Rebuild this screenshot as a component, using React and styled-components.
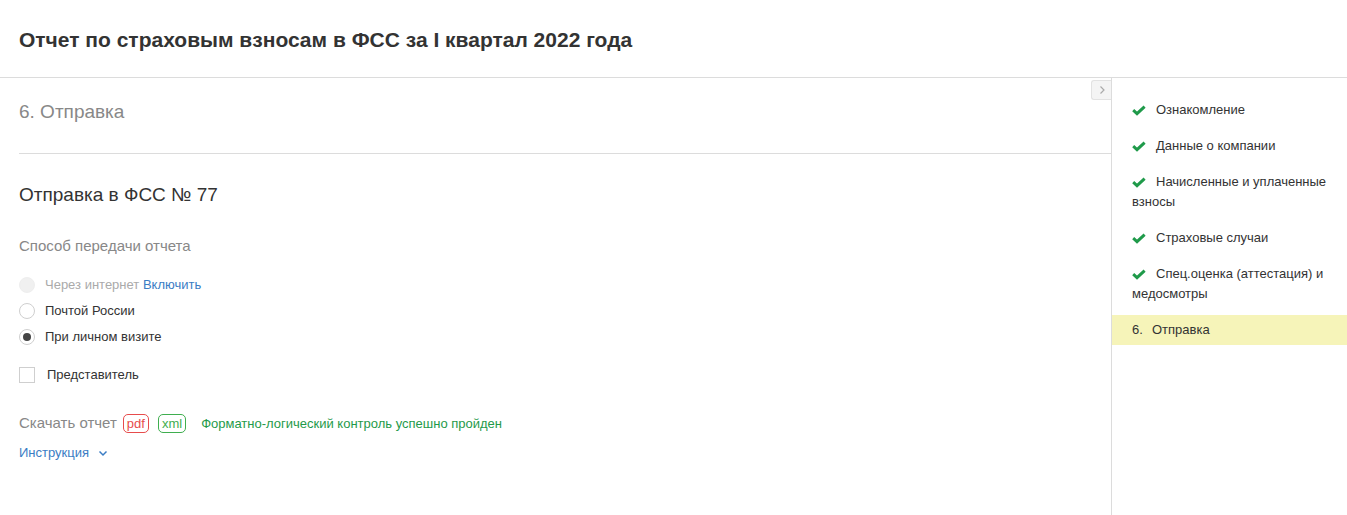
import React from "react";
import styled, { createGlobalStyle } from "styled-components";

const GlobalStyle = createGlobalStyle`
  html, body {
    margin: 0;
    padding: 0;
    background: #fff;
    font-family: "Liberation Sans", Arial, sans-serif;
    color: #333;
  }
`;

const steps = [
  { label: "Ознакомление", done: true },
  { label: "Данные о компании", done: true },
  { label: "Начисленные и уплаченные взносы", done: true },
  { label: "Страховые случаи", done: true },
  { label: "Спец.оценка (аттестация) и медосмотры", done: true },
  { label: "Отправка", num: 6, active: true },
];

const Check = () => (
  <svg width="14" height="11" viewBox="0 0 14 11">
    <path d="M1.2 5.2 L5 8.6 L12.6 1.6" fill="none" stroke="#1f9a4a" strokeWidth="3" />
  </svg>
);

const Chevron = ({ dir = "down", color = "#3b7dc4" }) => (
  <svg width="10" height="10" viewBox="0 0 10 10">
    {dir === "down" ? (
      <path d="M1.5 3.5 L5 7 L8.5 3.5" fill="none" stroke={color} strokeWidth="1.5" />
    ) : (
      <path d="M3.5 1.5 L7 5 L3.5 8.5" fill="none" stroke={color} strokeWidth="1.2" />
    )}
  </svg>
);

const App = () => {
  return (
    <Page>
      <GlobalStyle />
      <Header>
        <h1>Отчет по страховым взносам в ФСС за I квартал 2022 года</h1>
      </Header>
      <Body>
        <Main>
          <SectionTitle>6. Отправка</SectionTitle>
          <Content>
            <SubTitle>Отправка в ФСС № 77</SubTitle>
            <Label>Способ передачи отчета</Label>
            <Options>
              <Option disabled>
                <Radio disabled />
                <span>
                  Через интернет <Link>Включить</Link>
                </span>
              </Option>
              <Option>
                <Radio />
                <span>Почтой России</span>
              </Option>
              <Option>
                <Radio checked />
                <span>При личном визите</span>
              </Option>
            </Options>
            <CheckRow>
              <Box />
              <span>Представитель</span>
            </CheckRow>
            <Download>
              <Label as="span">Скачать отчет</Label>
              <Badge color="#e74c4c">pdf</Badge>
              <Badge color="#3fae4f">xml</Badge>
              <Success>Форматно-логический контроль успешно пройден</Success>
            </Download>
            <Instruction>
              Инструкция <Chevron />
            </Instruction>
          </Content>
        </Main>
        <Sidebar>
          <Toggle>
            <Chevron dir="right" color="#aaa" />
          </Toggle>
          <Steps>
            {steps.map((s) => (
              <Step key={s.label} active={s.active}>
                {s.done ? (
                  <Mark>
                    <Check />
                  </Mark>
                ) : (
                  <Num>{s.num}.</Num>
                )}
                {s.label}
              </Step>
            ))}
          </Steps>
        </Sidebar>
      </Body>
    </Page>
  );
};

const Page = styled.div`
  width: 1347px;
  height: 515px;
  display: flex;
  flex-direction: column;
  overflow: hidden;
`;

const Header = styled.div`
  height: 77px;
  flex-shrink: 0;
  border-bottom: 1px solid #dcdcdc;
  display: flex;
  align-items: center;
  padding: 0 19px;

  h1 {
    margin: 0;
    font-size: 21px;
    font-weight: 700;
    color: #333;
    position: relative;
    top: 1px;
  }
`;

const Body = styled.div`
  flex: 1;
  display: flex;
`;

const Main = styled.div`
  flex: 1;
  padding-left: 19px;
`;

const SectionTitle = styled.div`
  height: 76px;
  box-sizing: border-box;
  border-bottom: 1px solid #dcdcdc;
  display: flex;
  align-items: center;
  font-size: 19px;
  color: #888;
  padding-bottom: 8px;
`;

const Content = styled.div`
  display: flex;
  flex-direction: column;
  align-items: flex-start;
`;

const SubTitle = styled.div`
  font-size: 19px;
  color: #333;
  margin-top: 30px;
  line-height: 22px;
`;

const Label = styled.div`
  font-size: 15px;
  color: #888;
  margin-top: 30px;
  line-height: 20px;
`;

const Options = styled.div`
  display: flex;
  flex-direction: column;
  gap: 7px;
  margin-top: 19px;
`;

const Option = styled.label`
  display: flex;
  align-items: center;
  gap: 10px;
  font-size: 13px;
  line-height: 19px;
  height: 19px;
  color: ${(p) => (p.disabled ? "#aaa" : "#333")};
`;

const Radio = styled.span`
  width: 14px;
  height: 14px;
  border-radius: 50%;
  border: 1px solid ${(p) => (p.disabled ? "#eee" : "#cfcfcf")};
  background: ${(p) => (p.disabled ? "#f0f0f0" : "#fff")};
  display: flex;
  align-items: center;
  justify-content: center;

  &::after {
    content: "";
    display: ${(p) => (p.checked ? "block" : "none")};
    width: 8px;
    height: 8px;
    border-radius: 50%;
    background: #444;
  }
`;

const Link = styled.span`
  color: #3b7dc4;
`;

const CheckRow = styled.label`
  display: flex;
  align-items: center;
  gap: 12px;
  font-size: 13px;
  line-height: 19px;
  color: #333;
  margin-top: 19px;
`;

const Box = styled.span`
  width: 14px;
  height: 14px;
  border: 1px solid #cfcfcf;
  background: #fff;
`;

const Download = styled.div`
  display: flex;
  align-items: center;
  gap: 6px;
  margin-top: 29px;

  ${Label} {
    margin: 0;
  }
`;

const Badge = styled.span`
  font-size: 13px;
  color: ${(p) => p.color};
  border: 1px solid ${(p) => p.color};
  border-radius: 5px;
  padding: 0 3px;
  line-height: 17px;
  & + & {
    margin-left: 3px;
  }
`;

const Success = styled.span`
  font-size: 13px;
  color: #1f9a4a;
  margin-left: 9px;
`;

const Instruction = styled.div`
  display: flex;
  align-items: center;
  gap: 9px;
  font-size: 13px;
  color: #3b7dc4;
  margin-top: 12px;
`;

const Sidebar = styled.div`
  width: 235px;
  border-left: 1px solid #dcdcdc;
  position: relative;
`;

const Toggle = styled.div`
  position: absolute;
  left: -21px;
  top: 2px;
  width: 19px;
  height: 18px;
  background: #f4f4f4;
  border: 1px solid #e2e2e2;
  border-right: none;
  border-radius: 3px 0 0 3px;
  display: flex;
  align-items: center;
  justify-content: center;
`;

const Steps = styled.div`
  padding-top: 14px;
`;

const Step = styled.div`
  font-size: 13px;
  line-height: 20px;
  color: #333;
  padding: ${(p) => (p.active ? "5px" : "8px")} 12px ${(p) => (p.active ? "5px" : "8px")} 20px;
  margin-top: ${(p) => (p.active ? "3px" : "0")};
  background: ${(p) => (p.active ? "#f6f4b9" : "transparent")};
`;

const Mark = styled.span`
  display: inline-block;
  width: 24px;
  height: 20px;
  vertical-align: top;

  svg {
    display: block;
    margin-top: 5px;
  }
`;

const Num = styled.span`
  display: inline-block;
  width: 20px;
`;

export default App;
